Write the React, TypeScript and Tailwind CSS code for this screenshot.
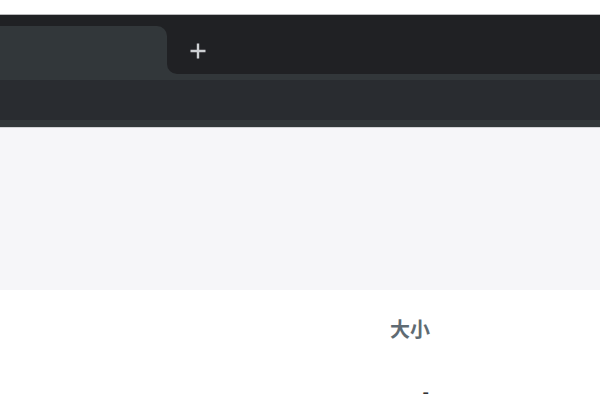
import React from "react";

function PlusIcon(): React.JSX.Element {
  return (
    <svg width="18" height="18" viewBox="0 0 18 18" fill="none">
      <path d="M9 1.5v15M1.5 9h15" stroke="#cdd0d3" strokeWidth="2.4" />
    </svg>
  );
}

export default function App(): React.JSX.Element {
  return (
    <div
      className="min-h-screen bg-white"
      style={{ fontFamily: '"Noto Sans", "Noto Sans CJK SC", sans-serif' }}
    >
      <div className="h-[14px] bg-white" />
      <div className="h-px bg-[#b9b9bb]" />

      {/* tab strip */}
      <div className="flex h-[59px] bg-[#202124]">
        <div className="flex w-[167px] flex-col">
          <div className="h-[11px]" />
          <div className="flex-1 rounded-tr-[10px] bg-[#32373a]" />
        </div>
        <div className="flex-1 bg-[#32373a]">
          <div className="flex h-full rounded-bl-[10px] bg-[#202124] pl-[22px] pt-[27px]">
            <PlusIcon />
          </div>
        </div>
      </div>

      {/* toolbar */}
      <div className="h-[53px] border-t-[6px] border-b-[7px] border-[#32373a] bg-[#292c30]" />
      <div className="h-px bg-[#d2d3d6]" />

      {/* banner */}
      <div className="h-[162px] bg-[#f6f6f9]" />

      {/* table */}
      <div className="pt-[28px]">
        <div className="flex justify-end pr-[170px]">
          <div className="w-[80px] text-right text-[20px] leading-[24px] font-bold text-[#5f6b73]">
            大小
          </div>
        </div>
        <div className="mt-[42px] flex justify-end pr-[171px]">
          <div className="w-[80px] text-right text-[20px] leading-[16px] text-[#333]">
            -
          </div>
        </div>
      </div>
    </div>
  );
}
